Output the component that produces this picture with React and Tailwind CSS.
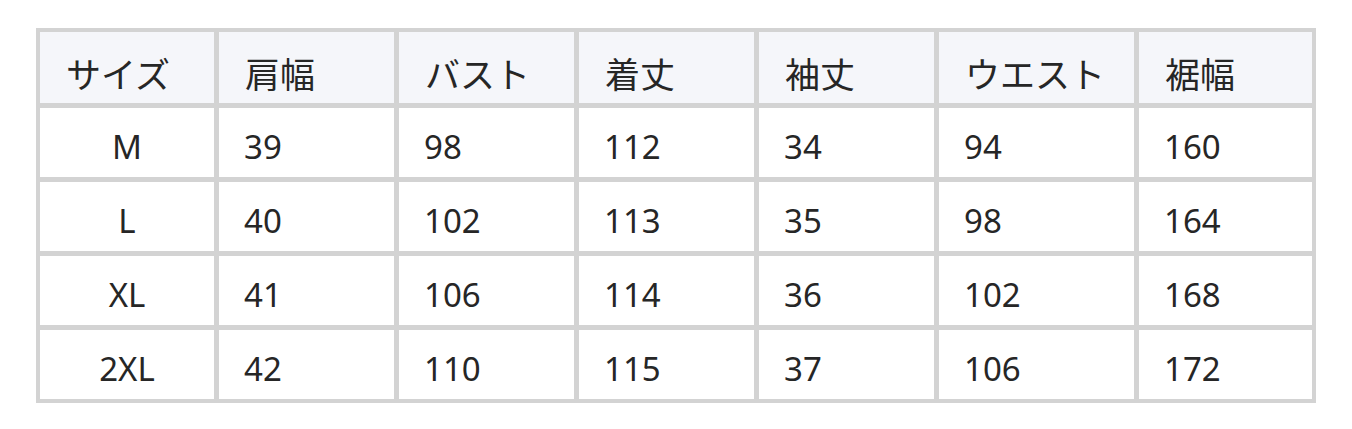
import React from "react";

const headers = ["サイズ", "肩幅", "バスト", "着丈", "袖丈", "ウエスト", "裾幅"];

const rows = [
  ["M", "39", "98", "112", "34", "94", "160"],
  ["L", "40", "102", "113", "35", "98", "164"],
  ["XL", "41", "106", "114", "36", "102", "168"],
  ["2XL", "42", "110", "115", "37", "106", "172"],
];

export default function App() {
  return (
    <div className="w-[1352px] h-[429px] bg-white pt-[28px] pl-[36px] font-['Noto_Sans','Noto_Sans_CJK_JP',sans-serif] text-[#262626]">
      <div className="inline-grid grid-cols-[174px_175px_175px_175px_175px_195px_173px] gap-[5px] bg-[#d3d3d3] border-4 border-[#d3d3d3]">
        {/* header */}
        {headers.map((h) => (
          <div
            key={h}
            className="h-[71px] bg-[#f5f6fa] flex items-center pl-[26px] pt-[10px] text-[35px] leading-none font-['Noto_Sans_CJK_JP',sans-serif]"
          >
            {h}
          </div>
        ))}

        {/* body */}
        {rows.map((row) =>
          row.map((cell, i) => (
            <div
              key={row[0] + i}
              className={
                i === 0
                  ? "h-[69px] bg-white flex items-center justify-center pt-[7px] text-[33px] leading-none"
                  : "h-[69px] bg-white flex items-center pl-[25px] pt-[7px] text-[33px] leading-none"
              }
            >
              {cell}
            </div>
          ))
        )}
      </div>
    </div>
  );
}
